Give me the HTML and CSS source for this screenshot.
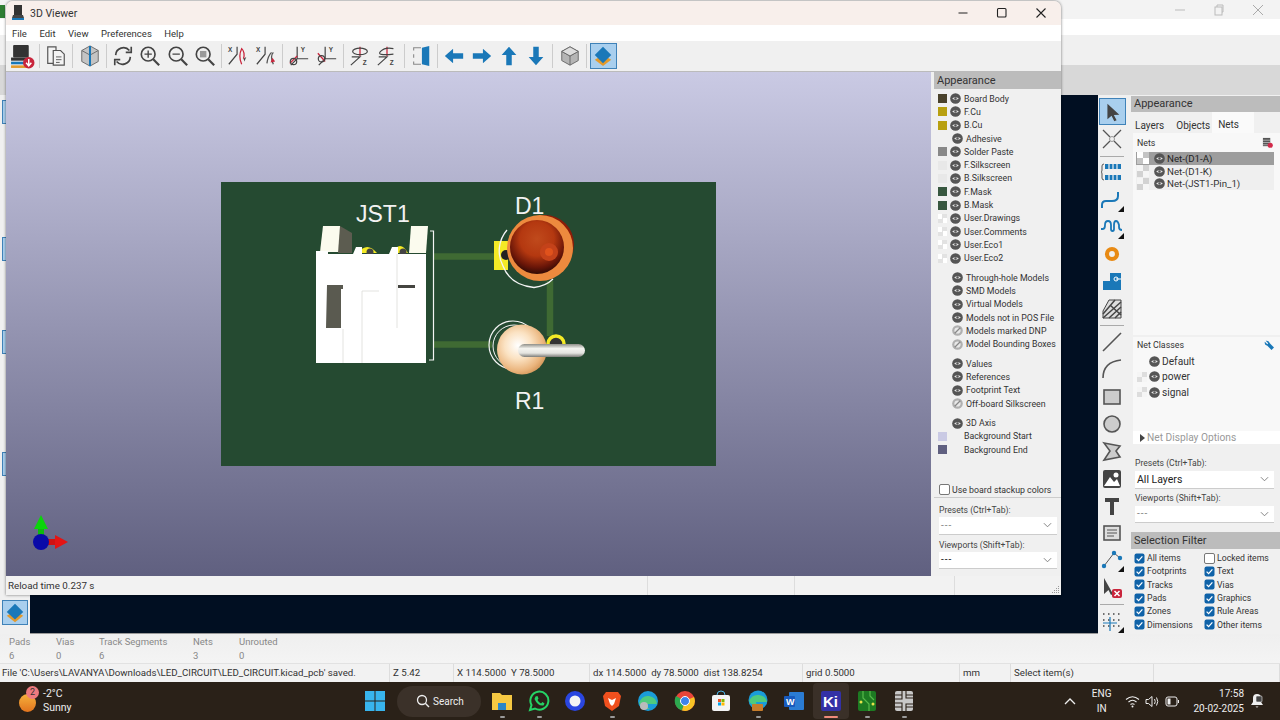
FILE: index.html
```html
<!DOCTYPE html>
<html lang="en">
<head>
<meta charset="utf-8">
<title>3D Viewer</title>
<link rel="stylesheet" href="styles.css">
</head>
<body>
<svg class="defs" width="0" height="0" aria-hidden="true">
  <symbol id="eye" viewBox="0 0 12 12"><circle cx="6" cy="6" r="5.800" fill="#555"/><path d="M2.400 6Q6 3 9.600 6Q6 9 2.400 6Z" fill="#e8e8e8"/><circle cx="6" cy="6" r="1.300" fill="#555"/></symbol>
  <symbol id="eyeoff" viewBox="0 0 12 12"><circle cx="6" cy="6" r="5.800" fill="#b0b0b0"/><circle cx="6" cy="6" r="3.400" fill="#e8e8e8"/><path d="M3 9L9 3" stroke="#888" stroke-width="1.400"/></symbol>
  <symbol id="check" viewBox="0 0 11 11"><rect x=".5" y=".5" width="10" height="10" rx="2" fill="#0f62a8"/><path d="M2.600 5.600L4.600 7.600L8.400 3.400" fill="none" stroke="#fff" stroke-width="1.300"/></symbol>
  <symbol id="chev" viewBox="0 0 10 6"><path d="M1 1L5 5L9 1" fill="none" stroke="#777" stroke-width="1"/></symbol>
</svg>

<div class="desktop">
  <!-- main PCB editor window behind -->
  <div class="main-win">
    <div class="main-title">
      <span class="main-appicon"></span>
      <div class="main-ctrl">
        <svg width="12" height="12" viewBox="0 0 12 12"><path d="M1 6H11" stroke="#bbb"/></svg>
        <svg width="12" height="12" viewBox="0 0 12 12"><rect x="2" y="3" width="7" height="8" fill="none" stroke="#bbb"/><path d="M4 3V1H10V8H9" fill="none" stroke="#bbb"/></svg>
        <svg width="12" height="12" viewBox="0 0 12 12"><path d="M1 1L11 11M11 1L1 11" stroke="#aaa"/></svg>
      </div>
    </div>
    <div class="main-menu"></div>
    <div class="main-tools"></div>
    <div class="main-strip"></div>
    <div class="main-body">
      <div class="left-tools">
        <span class="lt-btn lt-a"></span>
        <span class="lt-btn lt-b"></span>
        <span class="lt-btn lt-c"></span>
        <span class="lt-btn lt-d"></span>
        <span class="lt-btn lt-e">
          <svg width="22" height="22" viewBox="0 0 24 24"><path d="M12 10L21 15L12 22L3 15Z" fill="#e39a2c"/><path d="M12 2L21 11L12 19L3 11Z" fill="#1a78b8"/></svg>
        </span>
      </div>
      <div class="pcb-canvas"></div>
      <div class="right-tools">
        <span class="rt-btn rt-active"><svg width="22" height="22" viewBox="0 0 24 24"><path d="M7 3V20L11.500 16L14.500 22L17 21L14 15.200L20 15Z" fill="#444"/></svg></span>
        <span class="rt-btn"><svg width="24" height="24" viewBox="0 0 24 24"><path d="M3 3L10 10M21 3L14 10M3 21L10 14M21 21L14 14" stroke="#555" stroke-width="1.300"/><circle cx="12" cy="12" r="2.500" fill="none" stroke="#999"/></svg></span>
        <span class="rt-sep"></span>
        <span class="rt-btn"><svg width="24" height="24" viewBox="0 0 24 24"><path d="M5 4H21V9H5ZM5 15H21V20H5Z" fill="#1a78b8"/><path d="M9 4V9M13 4V9M17 4V9M9 15V20M13 15V20M17 15V20" stroke="#f0f0f0" stroke-width="1.200"/><path d="M4 4Q2 4 2 6V10Q2 12 1 12Q2 12 2 14V18Q2 20 4 20" fill="none" stroke="#555"/></svg></span>
        <span class="rt-btn"><svg width="24" height="24" viewBox="0 0 24 24"><path d="M2 20V17Q2 13 6 13H12Q18 13 18 8V4" fill="none" stroke="#1a78b8" stroke-width="2"/><path d="M24 24H18L24 18Z" fill="#111"/></svg></span>
        <span class="rt-btn"><svg width="24" height="24" viewBox="0 0 24 24"><path d="M1 14H3Q5 14 5 10T8 6T11 10V14Q11 16 12.500 16T14 14V10Q14 6 16 6T19 10V12Q19 15 22 15" fill="none" stroke="#1a78b8" stroke-width="1.800"/><path d="M24 24H18L24 18Z" fill="#111"/></svg></span>
        <span class="rt-btn"><svg width="20" height="20" viewBox="0 0 24 24"><circle cx="12" cy="12" r="6" fill="none" stroke="#e88a14" stroke-width="5"/></svg></span>
        <span class="rt-btn"><svg width="24" height="24" viewBox="0 0 24 24"><path d="M3 12H10V4H21V21H3Z" fill="#1a78b8"/><circle cx="16" cy="10" r="2" fill="none" stroke="#fff"/><path d="M16 10H21" stroke="#fff"/></svg></span>
        <span class="rt-btn"><svg width="24" height="24" viewBox="0 0 24 24"><path d="M3 14L9 3H21V21H3Z" fill="#ddd" stroke="#444"/><path d="M3 17L15 3M3 21L21 5M9 21L21 10M15 21L21 15M10 8L21 18" stroke="#444" stroke-width="1.500"/></svg></span>
        <span class="rt-sep"></span>
        <span class="rt-btn"><svg width="24" height="24" viewBox="0 0 24 24"><path d="M3 21L21 3" stroke="#555" stroke-width="1.600"/></svg></span>
        <span class="rt-btn"><svg width="24" height="24" viewBox="0 0 24 24"><path d="M3 21Q3 5 21 3" fill="none" stroke="#555" stroke-width="1.600"/></svg></span>
        <span class="rt-btn"><svg width="24" height="24" viewBox="0 0 24 24"><rect x="4" y="5" width="16" height="14" fill="#ccc" stroke="#555" stroke-width="1.600"/></svg></span>
        <span class="rt-btn"><svg width="24" height="24" viewBox="0 0 24 24"><circle cx="12" cy="12" r="8" fill="#ccc" stroke="#555" stroke-width="1.600"/></svg></span>
        <span class="rt-btn"><svg width="24" height="24" viewBox="0 0 24 24"><path d="M4 4L20 7L16 12L20 18L4 21L10 12Z" fill="#ccc" stroke="#555" stroke-width="1.600"/></svg></span>
        <span class="rt-btn"><svg width="24" height="24" viewBox="0 0 24 24"><rect x="3" y="3" width="18" height="18" rx="2" fill="#444"/><circle cx="16" cy="8" r="2.500" fill="#fff"/><path d="M4 19L10 10L14 15L17 12L20 19Z" fill="#fff"/></svg></span>
        <span class="rt-btn"><svg width="24" height="24" viewBox="0 0 24 24"><path d="M5 4H19V8H14V21H10V8H5Z" fill="#444"/></svg></span>
        <span class="rt-btn"><svg width="24" height="24" viewBox="0 0 24 24"><rect x="4" y="5" width="16" height="14" fill="#ddd" stroke="#555" stroke-width="1.600"/><path d="M7 9H17M7 12H17M7 15H14" stroke="#555"/></svg></span>
        <span class="rt-btn"><svg width="24" height="24" viewBox="0 0 24 24"><path d="M4 18L14 5L20 10" fill="none" stroke="#555"/><circle cx="4" cy="18" r="2.200" fill="#1a78b8"/><circle cx="14" cy="5" r="2.200" fill="#1a78b8"/><circle cx="20" cy="10" r="2.200" fill="#1a78b8"/><path d="M24 24H18L24 18Z" fill="#111"/></svg></span>
        <span class="rt-btn"><svg width="24" height="24" viewBox="0 0 24 24"><path d="M4 2V18L8.500 14L11 19L13 18Z" fill="#444"/><rect x="12" y="13" width="10" height="9" rx="2" fill="#c9253c"/><path d="M14.500 15L19.500 20M19.500 15L14.500 20" stroke="#fff" stroke-width="1.500"/></svg></span>
        <span class="rt-sep"></span>
        <span class="rt-btn"><svg width="24" height="24" viewBox="0 0 24 24"><path d="M3 5H21M3 11H21M3 17H21" stroke="#444" stroke-width="1.500" stroke-dasharray="1.500 3.500"/><path d="M3 14H17M10 8V22" stroke="#1a78b8" stroke-width="1.200"/><path d="M24 24H18L24 18Z" fill="#111"/></svg></span>
      </div>
      <aside class="pcb-panel">
        <div class="panel-head">Appearance</div>
        <div class="tabs"><span class="tab">Layers</span><span class="tab">Objects</span><span class="tab tab-on">Nets</span></div>
        <section class="nets-box">
          <div class="nets-label"><span>Nets</span>
            <svg width="11" height="11" viewBox="0 0 12 12"><rect x="1" y="1" width="8" height="9" fill="#555"/><path d="M1 3.500H9M1 6H9M1 8.500H9" stroke="#eee" stroke-width=".6"/><circle cx="9" cy="9" r="2.800" fill="#d22a4a"/></svg>
          </div>
          <div class="net-row net-sel"><i class="sw-check sw-w"></i><svg class="eye"><use href="#eye"/></svg><span>Net-(D1-A)</span></div>
          <div class="net-row"><i class="sw-check"></i><svg class="eye"><use href="#eye"/></svg><span>Net-(D1-K)</span></div>
          <div class="net-row"><i class="sw-check"></i><svg class="eye"><use href="#eye"/></svg><span>Net-(JST1-Pin_1)</span></div>
        </section>
        <section class="classes-box">
          <div class="nets-label"><span>Net Classes</span>
            <svg width="10" height="10" viewBox="0 0 12 12"><path d="M2 1L5 4L4 5L1 2Q0 6 4 7L9 12L12 9L7 4Q6 0 2 1Z" fill="#1a78b8"/></svg>
          </div>
          <div class="class-row"><svg class="eye"><use href="#eye"/></svg><span>Default</span></div>
          <div class="class-row"><i class="sw-y"></i><svg class="eye"><use href="#eye"/></svg><span>power</span></div>
          <div class="class-row"><i class="sw-y"></i><svg class="eye"><use href="#eye"/></svg><span>signal</span></div>
        </section>
        <div class="net-opts"><svg width="6" height="8" viewBox="0 0 6 8"><path d="M1 0L6 4L1 8Z" fill="#444"/></svg><span>Net Display Options</span></div>
        <div class="preset-box">
          <label class="field-label">Presets (Ctrl+Tab):</label>
          <div class="drop"><span class="drop-big">All Layers</span><svg class="chev"><use href="#chev"/></svg></div>
          <label class="field-label">Viewports (Shift+Tab):</label>
          <div class="drop"><span>---</span><svg class="chev"><use href="#chev"/></svg></div>
        </div>
        <div class="panel-head sel-head">Selection Filter</div>
        <div class="sel-grid">
          <div class="sel"><svg class="ck"><use href="#check"/></svg>All items</div>
          <div class="sel"><i class="ck-off"></i>Locked items</div>
          <div class="sel"><svg class="ck"><use href="#check"/></svg>Footprints</div>
          <div class="sel"><svg class="ck"><use href="#check"/></svg>Text</div>
          <div class="sel"><svg class="ck"><use href="#check"/></svg>Tracks</div>
          <div class="sel"><svg class="ck"><use href="#check"/></svg>Vias</div>
          <div class="sel"><svg class="ck"><use href="#check"/></svg>Pads</div>
          <div class="sel"><svg class="ck"><use href="#check"/></svg>Graphics</div>
          <div class="sel"><svg class="ck"><use href="#check"/></svg>Zones</div>
          <div class="sel"><svg class="ck"><use href="#check"/></svg>Rule Areas</div>
          <div class="sel"><svg class="ck"><use href="#check"/></svg>Dimensions</div>
          <div class="sel"><svg class="ck"><use href="#check"/></svg>Other items</div>
        </div>
      </aside>
    </div>
    <div class="msg-panel">
      <div class="msg"><span>Pads</span><span>6</span></div>
      <div class="msg"><span>Vias</span><span>0</span></div>
      <div class="msg"><span>Track Segments</span><span>6</span></div>
      <div class="msg"><span>Nets</span><span>3</span></div>
      <div class="msg"><span>Unrouted</span><span>0</span></div>
    </div>
    <div class="main-status">
      <span>File 'C:\Users\LAVANYA\Downloads\LED_CIRCUIT\LED_CIRCUIT.kicad_pcb' saved.</span>
      <span>Z 5.42</span>
      <span>X 114.5000&nbsp; Y 78.5000</span>
      <span>dx 114.5000&nbsp; dy 78.5000&nbsp; dist 138.8254</span>
      <span>grid 0.5000</span>
      <span>mm</span>
      <span>Select item(s)</span>
      <span></span>
    </div>
  </div>

  <div class="taskbar">
    <div class="weather">
      <span class="sun"><b class="badge">2</b></span>
      <div class="weather-text"><span>-2°C</span><span>Sunny</span></div>
    </div>
    <div class="task-center">
      <svg class="win" width="22" height="22" viewBox="0 0 22 22"><path d="M1 1H10.500V10.500H1ZM11.500 1H21V10.500H11.500ZM1 11.500H10.500V21H1ZM11.500 11.500H21V21H11.500Z" fill="#38b5ee"/></svg>
      <div class="search"><svg width="14" height="14" viewBox="0 0 14 14"><circle cx="6" cy="6" r="4.500" fill="none" stroke="#eee" stroke-width="1.300"/><path d="M9.300 9.300L13 13" stroke="#eee" stroke-width="1.400"/></svg><span>Search</span></div>
      <span class="tb-ico"><svg width="22" height="22" viewBox="0 0 22 22"><path d="M1 3H9L11 5H21V20H1Z" fill="#f5c842"/><rect x="7" y="13" width="8" height="7" fill="#2a86c8"/></svg><i class="pip"></i></span>
      <span class="tb-ico"><svg width="22" height="22" viewBox="0 0 22 22"><path d="M2 20L3.500 15A9 9 0 1 1 7 18.500Z" fill="none" stroke="#25d366" stroke-width="2"/><path d="M7.500 6.500L9.500 6L10.500 8.500L9.500 10Q11 13 13 13.500L14.500 12L16.500 13.500L15.500 15.500Q10 16.500 6.500 9Z" fill="#25d366"/></svg><i class="pip"></i></span>
      <span class="tb-ico"><svg width="22" height="22" viewBox="0 0 22 22"><circle cx="11" cy="11" r="10" fill="#2a46e0"/><circle cx="11" cy="11" r="5.500" fill="#f4f4f4"/></svg></span>
      <span class="tb-ico"><svg width="22" height="22" viewBox="0 0 22 22"><path d="M5 2H17L20 6L18 16L11 21L4 16L2 6Z" fill="#f0501e"/><path d="M7 8L11 10L15 8L13 14L11 16L9 14Z" fill="#fff"/></svg><i class="pip"></i></span>
      <span class="tb-ico"><svg width="22" height="22" viewBox="0 0 22 22"><circle cx="11" cy="11" r="10" fill="#1a9cd8"/><path d="M2 13Q5 5 12 6T20 14H9Q9 17 13 19Q5 20 2 13Z" fill="#4fcb7e"/><circle cx="7" cy="16" r="4" fill="#bbb"/></svg></span>
      <span class="tb-ico"><svg width="22" height="22" viewBox="0 0 22 22"><circle cx="11" cy="11" r="10" fill="#e8453a"/><path d="M11 11L2 6A10 10 0 0 0 8 20.500Z" fill="#2da94f"/><path d="M11 11L8 20.500A10 10 0 0 0 20 7Z" fill="#f7c325"/><circle cx="11" cy="11" r="4.500" fill="#3d83ec" stroke="#fff"/></svg></span>
      <span class="tb-ico"><svg width="22" height="22" viewBox="0 0 22 22"><rect x="2" y="5" width="18" height="16" rx="2" fill="#f4f4f4"/><path d="M7 5Q7 1 11 1T15 5" fill="none" stroke="#4bb4e8"/><path d="M8 9H11V12H8Z" fill="#f25022"/><path d="M11.500 9H14.500V12H11.500Z" fill="#7fba00"/><path d="M8 12.500H11V15.500H8Z" fill="#00a4ef"/><path d="M11.500 12.500H14.500V15.500H11.500Z" fill="#ffb900"/></svg></span>
      <span class="tb-ico"><svg width="22" height="22" viewBox="0 0 22 22"><circle cx="11" cy="10" r="9.500" fill="#1a9cd8"/><path d="M2 11Q5 4 12 5T20 12H9Q9 15 13 16Q5 17 2 11Z" fill="#4fcb7e"/><rect x="5" y="14" width="11" height="7" rx="1" fill="#c77d2b"/></svg><i class="pip"></i></span>
      <span class="tb-ico"><svg width="22" height="22" viewBox="0 0 22 22"><rect x="6" y="2" width="15" height="18" rx="1" fill="#2b7cd3"/><rect x="1" y="6" width="11" height="11" rx="1" fill="#185abd"/><text x="3" y="15" class="tb-w">W</text></svg></span>
      <span class="tb-ico tb-on"><svg width="22" height="22" viewBox="0 0 22 22"><rect x="1" y="1" width="20" height="20" rx="2" fill="#3331a6"/><text x="3" y="17" class="tb-ki">Ki</text></svg><i class="pip pip-on"></i></span>
      <span class="tb-ico"><svg width="22" height="22" viewBox="0 0 22 22"><rect x="2" y="1" width="18" height="20" rx="2" fill="#1d7a22"/><path d="M7 1V8L13 14V21M14 1V6L18 10" fill="none" stroke="#57b94a" stroke-width="1.200"/><circle cx="5" cy="12" r="1.500" fill="#e8e24a"/><circle cx="17" cy="14" r="1.500" fill="#e8e24a"/></svg><i class="pip"></i></span>
      <span class="tb-ico"><svg width="22" height="22" viewBox="0 0 22 22"><rect x="2" y="1" width="18" height="20" rx="2" fill="#c8c8c8"/><path d="M9 1V9H2M13 1V8H20M9 21V13H2M13 21V14H20M2 5H9M13 5H20M2 17H9M13 17H20" fill="none" stroke="#2a2118" stroke-width="1.100"/></svg><i class="pip"></i></span>
    </div>
    <div class="tray">
      <svg width="12" height="8" viewBox="0 0 12 8"><path d="M1 7L6 2L11 7" fill="none" stroke="#eee" stroke-width="1.300"/></svg>
      <div class="lang"><span>ENG</span><span>IN</span></div>
      <svg width="15" height="13" viewBox="0 0 15 13"><path d="M1 4.500Q7.500 -1 14 4.500M3.500 7Q7.500 3.500 11.500 7M5.500 9.500Q7.500 8 9.500 9.500" fill="none" stroke="#eee" stroke-width="1.100"/><circle cx="7.500" cy="11.500" r="1" fill="#eee"/></svg>
      <svg width="15" height="13" viewBox="0 0 15 13"><path d="M1 4.500H3.500L7 1.500V11.500L3.500 8.500H1Z" fill="none" stroke="#eee"/><path d="M9.500 4Q11 6.500 9.500 9M11.500 2.500Q14 6.500 11.500 10.500" fill="none" stroke="#eee"/></svg>
      <svg width="15" height="11" viewBox="0 0 15 11"><rect x="1" y="1" width="11" height="9" rx="2" fill="none" stroke="#eee"/><rect x="2.500" y="2.500" width="3" height="6" fill="#eee"/><path d="M13.500 4V7" stroke="#eee"/></svg>
      <div class="clock"><span>17:58</span><span>20-02-2025</span></div>
      <svg width="14" height="16" viewBox="0 0 14 16"><path d="M7 1Q3 1 3 5V9L1 12H13L11 9V5Q11 1 7 1ZM5.500 13.500Q7 15.500 8.500 13.500Z" fill="#eee"/><rect x="6" y="3" width="6" height="6" rx="1" fill="#444" stroke="#eee" stroke-width=".6"/></svg>
    </div>
  </div>

  <!-- 3D Viewer floating window -->
  <div class="viewer">
    <div class="v-title">
      <svg width="14" height="16" viewBox="0 0 14 16"><rect x="3" y="0" width="8" height="10" fill="#333"/><path d="M2 10H12L13 13H1Z" fill="#444"/><rect x="1" y="13" width="12" height="2" fill="#1a78b8"/></svg>
      <span>3D Viewer</span>
      <div class="v-ctrl">
        <svg width="12" height="12" viewBox="0 0 12 12"><path d="M1.500 6H10.500" stroke="#222" stroke-width="1.200"/></svg>
        <svg width="12" height="12" viewBox="0 0 12 12"><rect x="1.500" y="1.500" width="8.500" height="8.500" rx="1" fill="none" stroke="#222" stroke-width="1.100"/></svg>
        <svg width="12" height="12" viewBox="0 0 12 12"><path d="M1.500 1.500L10.500 10.500M10.500 1.500L1.500 10.500" stroke="#222" stroke-width="1.100"/></svg>
      </div>
    </div>
    <nav class="v-menu"><span>File</span><span>Edit</span><span>View</span><span>Preferences</span><span>Help</span></nav>
    <div class="v-tools">
      <span class="t-btn"><svg width="25" height="25" viewBox="0 0 24 24"><rect x="3" y="1" width="15" height="12" rx="1" fill="#333"/><rect x="1" y="13" width="17" height="3" fill="#333"/><rect x="1" y="17" width="17" height="2.500" fill="#1a78b8"/><rect x="1" y="20.500" width="17" height="2.500" fill="#e39a2c"/><circle cx="18" cy="18" r="5.500" fill="#c9253c"/><path d="M18 14.500V20M15.500 18L18 21L20.500 18" fill="none" stroke="#fff" stroke-width="1.400"/></svg></span>
      <i class="t-sep"></i>
      <span class="t-btn"><svg width="22" height="22" viewBox="0 0 24 24"><path d="M3 2H12V20H3Z" fill="#f4f4f4" stroke="#555" stroke-width="1.300"/><path d="M9 6H17L21 10V22H9Z" fill="#f4f4f4" stroke="#555" stroke-width="1.300"/><path d="M12 13H18M12 16H18M12 19H16" stroke="#555"/></svg></span>
      <i class="t-sep"></i>
      <span class="t-btn"><svg width="22" height="22" viewBox="0 0 24 24"><path d="M12 1L21 6V18L12 23L3 18V6Z" fill="#c4c4c4" stroke="#666"/><path d="M3 6L12 11L21 6M12 11V23" fill="none" stroke="#666"/><path d="M12 1V23" stroke="#1a78b8" stroke-width="2.200"/></svg></span>
      <i class="t-sep"></i>
      <span class="t-btn"><svg width="22" height="22" viewBox="0 0 24 24"><path d="M4 11A8.500 8.500 0 0 1 19 6M20 13A8.500 8.500 0 0 1 5 18" fill="none" stroke="#444" stroke-width="1.800"/><path d="M21 2V8H15M3 22V16H9" fill="none" stroke="#444" stroke-width="1.800"/></svg></span>
      <span class="t-btn"><svg width="22" height="22" viewBox="0 0 24 24"><circle cx="10" cy="10" r="7.500" fill="none" stroke="#444" stroke-width="1.800"/><path d="M15.500 15.500L22 22" stroke="#444" stroke-width="2.400"/><path d="M6 10H14M10 6V14" stroke="#444" stroke-width="1.500"/></svg></span>
      <span class="t-btn"><svg width="22" height="22" viewBox="0 0 24 24"><circle cx="10" cy="10" r="7.500" fill="none" stroke="#444" stroke-width="1.800"/><path d="M15.500 15.500L22 22" stroke="#444" stroke-width="2.400"/><path d="M6 10H14" stroke="#444" stroke-width="1.500"/></svg></span>
      <span class="t-btn"><svg width="22" height="22" viewBox="0 0 24 24"><circle cx="10" cy="10" r="7.500" fill="none" stroke="#444" stroke-width="1.800"/><path d="M15.500 15.500L22 22" stroke="#444" stroke-width="2.400"/><rect x="6.500" y="6.500" width="7" height="7" fill="#999"/></svg></span>
      <i class="t-sep"></i>
      <span class="t-btn"><svg width="22" height="22" viewBox="0 0 24 24"><text x="1" y="8" class="ax">X</text><path d="M11 2V10L2 21" fill="none" stroke="#444" stroke-width="1.300"/><path d="M16 21Q12 12 16 4Q20 8 18 15" fill="none" stroke="#c9253c" stroke-width="1.400"/><path d="M18 15L21 13L19 18" fill="#444"/></svg></span>
      <span class="t-btn"><svg width="22" height="22" viewBox="0 0 24 24"><text x="1" y="8" class="ax">X</text><path d="M11 2V10L2 21" fill="none" stroke="#444" stroke-width="1.300"/><path d="M20 21Q16 12 20 8M13 20Q14 12 18 8" fill="none" stroke="#555" stroke-width="1.400"/><path d="M19 14L22 18L17 19Z" fill="#c9253c"/></svg></span>
      <i class="t-sep"></i>
      <span class="t-btn"><svg width="22" height="22" viewBox="0 0 24 24"><text x="14" y="8" class="ax">Y</text><path d="M10 2V15H22M10 15L3 22" fill="none" stroke="#444" stroke-width="1.300"/><path d="M2 20L10 12" stroke="#c9253c" stroke-width="1.400"/><circle cx="6" cy="18" r="3.500" fill="none" stroke="#444" stroke-width="1.300"/></svg></span>
      <span class="t-btn"><svg width="22" height="22" viewBox="0 0 24 24"><text x="14" y="8" class="ax">Y</text><path d="M10 2V15H22M10 15L3 22" fill="none" stroke="#444" stroke-width="1.300"/><path d="M2 9L10 18" stroke="#c9253c" stroke-width="1.400"/><circle cx="6" cy="15" r="3.500" fill="none" stroke="#444" stroke-width="1.300"/></svg></span>
      <i class="t-sep"></i>
      <span class="t-btn"><svg width="22" height="22" viewBox="0 0 24 24"><text x="15" y="22" class="ax">Z</text><path d="M3 13H12L2 22" fill="none" stroke="#444" stroke-width="1.300"/><path d="M12 2V12" stroke="#c9253c" stroke-width="1.400"/><ellipse cx="12" cy="7" rx="8" ry="3.500" fill="none" stroke="#444" stroke-width="1.300"/></svg></span>
      <span class="t-btn"><svg width="22" height="22" viewBox="0 0 24 24"><text x="15" y="22" class="ax">Z</text><path d="M3 13H12L2 22" fill="none" stroke="#444" stroke-width="1.300"/><path d="M12 2V12" stroke="#c9253c" stroke-width="1.400"/><path d="M19 4Q10 2 5 7T19 10" fill="none" stroke="#444" stroke-width="1.300"/></svg></span>
      <i class="t-sep"></i>
      <span class="t-btn"><svg width="22" height="22" viewBox="0 0 24 24"><path d="M13 3L21 1V23L13 21Z" fill="#1a78b8"/><path d="M12 3H4V6M4 10V14M4 18V21H12" fill="none" stroke="#888" stroke-width="1.200"/></svg></span>
      <i class="t-sep"></i>
      <span class="t-btn"><svg width="22" height="22" viewBox="0 0 24 24"><path d="M2 12L11 4V9H22V15H11V20Z" fill="#1a78b8"/></svg></span>
      <span class="t-btn"><svg width="22" height="22" viewBox="0 0 24 24"><path d="M22 12L13 4V9H2V15H13V20Z" fill="#1a78b8"/></svg></span>
      <span class="t-btn"><svg width="22" height="22" viewBox="0 0 24 24"><path d="M12 2L20 11H15V22H9V11H4Z" fill="#1a78b8"/></svg></span>
      <span class="t-btn"><svg width="22" height="22" viewBox="0 0 24 24"><path d="M12 22L20 13H15V2H9V13H4Z" fill="#1a78b8"/></svg></span>
      <i class="t-sep"></i>
      <span class="t-btn"><svg width="22" height="22" viewBox="0 0 24 24"><path d="M12 2L21 7V17L12 22L3 17V7Z" fill="#b5b5b5" stroke="#666"/><path d="M3 7L12 12L21 7M12 12V22" fill="none" stroke="#666"/><path d="M3 7L12 2L21 7L12 12Z" fill="#ddd" stroke="#666"/></svg></span>
      <i class="t-sep"></i>
      <span class="t-btn t-on"><svg width="22" height="22" viewBox="0 0 24 24"><path d="M12 11L21 16L12 23L3 16Z" fill="#e39a2c"/><path d="M12 2L21 11L12 20L3 11Z" fill="#1a78b8"/></svg></span>
    </div>
    <div class="v-body">
      <div class="v-canvas">
        <svg class="scene" width="924" height="504" viewBox="7 71 924 504">
          <defs>
            <radialGradient id="ledg" cx="50%" cy="35%" r="70%"><stop offset="0" stop-color="#c04a1c"/><stop offset=".45" stop-color="#b43810"/><stop offset=".75" stop-color="#6a1608"/><stop offset="1" stop-color="#1c0604"/></radialGradient>
            <radialGradient id="resg" cx="42%" cy="42%" r="60%"><stop offset="0" stop-color="#fff"/><stop offset=".45" stop-color="#fbe2c2"/><stop offset=".85" stop-color="#eab47c"/><stop offset="1" stop-color="#d89c60"/></radialGradient>
            <linearGradient id="leadg" x1="0" y1="0" x2="0" y2="1"><stop offset="0" stop-color="#8e8e88"/><stop offset=".35" stop-color="#f4f4f0"/><stop offset=".7" stop-color="#e4e4e0"/><stop offset="1" stop-color="#7c7c78"/></linearGradient>
          </defs>
          <rect x="221" y="181" width="495" height="284" fill="#254a31"/>
          <path d="M433 255.500H495M433 343.500H492M550 280V335" fill="none" stroke="#3f6a33" stroke-width="6.500"/>
          <text x="356" y="221" class="silk">JST1</text>
          <text x="515" y="213" class="silk">D1</text>
          <text x="515" y="408" class="silk">R1</text>
          <path d="M430 230H433.500V359H429" fill="none" stroke="#f4f4f4" stroke-width="1.200"/>
          <!-- pads behind connector -->
          <path d="M358 252Q367 240 377 252Z" fill="#f4ea26"/>
          <path d="M392 252Q400 238 408 252Z" fill="#f4ea26"/>
          <circle cx="370" cy="251" r="3.500" fill="#444"/>
          <circle cx="403" cy="251" r="3.500" fill="#444"/>
          <!-- JST connector -->
          <path d="M320 251L323 225H340L340 251Z" fill="#fbfbee"/>
          <path d="M340 225L352 232V252H338Z" fill="#5c5c50"/>
          <path d="M411 225H428L426 252H409Z" fill="#fbfbee"/>
          <path d="M316 250H328V253H353L356 246H362V253H389L392 246H398V253H426V362H316Z" fill="#fff"/>
          <path d="M327 284H343V288H341V327H326Z" fill="#5a5a50"/>
          <rect x="398" y="284" width="17" height="3" fill="#454540"/>
          <path d="M343 328V362M362 290V362M362 290H379M397 253V327" fill="none" stroke="#dcdcd8" stroke-width=".8"/>
          <!-- LED -->
          <rect x="494" y="240" width="14" height="29" fill="#f4ea26"/>
          <circle cx="506" cy="254" r="5" fill="#222"/>
          <path d="M507 229A32 32 0 0 0 503 265Q510 284 534 286.500Q546 285 553 278" fill="none" stroke="#f4f4f4" stroke-width="1.300"/>
          <circle cx="545" cy="243" r="29" fill="#8c1c08"/>
          <circle cx="540" cy="247" r="33" fill="#ed8a3e"/>
          <circle cx="537" cy="246" r="27" fill="url(#ledg)"/>
          <circle cx="549" cy="251" r="9" fill="#c4421a"/>
          <circle cx="549" cy="251" r="4" fill="#e0521c"/>
          <!-- resistor -->
          <circle cx="513" cy="344" r="24" fill="none" stroke="#f4f4f4" stroke-width="1.200"/>
          <circle cx="514" cy="345" r="21" fill="none" stroke="#f4f4f4" stroke-width="1"/>
          <circle cx="556" cy="343" r="7" fill="#333"/>
          <path d="M548 343A8 8 0 0 1 564 343" fill="none" stroke="#f4ea26" stroke-width="3.500"/>
          <circle cx="522" cy="348.500" r="25" fill="url(#resg)"/>
          <rect x="518" y="343" width="67" height="13" rx="6.500" fill="url(#leadg)"/>
          <!-- axis -->
          <path d="M41 540V526" stroke="#0dbb0d" stroke-width="6"/>
          <path d="M41 514L48 528H34Z" fill="#0bd40b"/>
          <path d="M48 541H58" stroke="#d01212" stroke-width="6"/>
          <path d="M68 541L55 534V548Z" fill="#e41414"/>
          <circle cx="41" cy="541" r="8" fill="#0a0aa8"/>
        </svg>
      </div>
      <aside class="v-panel">
        <div class="panel-head">Appearance</div>
        <div class="layer-list">
          <div class="lr"><i class="sw sw-board"></i><svg class="eye"><use href="#eye"/></svg><span>Board Body</span></div>
          <div class="lr"><i class="sw sw-cu"></i><svg class="eye"><use href="#eye"/></svg><span>F.Cu</span></div>
          <div class="lr"><i class="sw sw-cu"></i><svg class="eye"><use href="#eye"/></svg><span>B.Cu</span></div>
          <div class="lr lr-n"><svg class="eye"><use href="#eye"/></svg><span>Adhesive</span></div>
          <div class="lr"><i class="sw sw-paste"></i><svg class="eye"><use href="#eye"/></svg><span>Solder Paste</span></div>
          <div class="lr"><i class="sw sw-silk"></i><svg class="eye"><use href="#eye"/></svg><span>F.Silkscreen</span></div>
          <div class="lr"><i class="sw sw-silk"></i><svg class="eye"><use href="#eye"/></svg><span>B.Silkscreen</span></div>
          <div class="lr"><i class="sw sw-mask"></i><svg class="eye"><use href="#eye"/></svg><span>F.Mask</span></div>
          <div class="lr"><i class="sw sw-mask"></i><svg class="eye"><use href="#eye"/></svg><span>B.Mask</span></div>
          <div class="lr"><i class="sw sw-chk"></i><svg class="eye"><use href="#eye"/></svg><span>User.Drawings</span></div>
          <div class="lr"><i class="sw sw-chk"></i><svg class="eye"><use href="#eye"/></svg><span>User.Comments</span></div>
          <div class="lr"><i class="sw sw-chk"></i><svg class="eye"><use href="#eye"/></svg><span>User.Eco1</span></div>
          <div class="lr"><i class="sw sw-chk"></i><svg class="eye"><use href="#eye"/></svg><span>User.Eco2</span></div>
          <div class="lr lr-n lr-gap"><svg class="eye"><use href="#eye"/></svg><span>Through-hole Models</span></div>
          <div class="lr lr-n"><svg class="eye"><use href="#eye"/></svg><span>SMD Models</span></div>
          <div class="lr lr-n"><svg class="eye"><use href="#eye"/></svg><span>Virtual Models</span></div>
          <div class="lr lr-n"><svg class="eye"><use href="#eye"/></svg><span>Models not in POS File</span></div>
          <div class="lr lr-n"><svg class="eye"><use href="#eyeoff"/></svg><span>Models marked DNP</span></div>
          <div class="lr lr-n"><svg class="eye"><use href="#eyeoff"/></svg><span>Model Bounding Boxes</span></div>
          <div class="lr lr-n lr-gap"><svg class="eye"><use href="#eye"/></svg><span>Values</span></div>
          <div class="lr lr-n"><svg class="eye"><use href="#eye"/></svg><span>References</span></div>
          <div class="lr lr-n"><svg class="eye"><use href="#eye"/></svg><span>Footprint Text</span></div>
          <div class="lr lr-n"><svg class="eye"><use href="#eyeoff"/></svg><span>Off-board Silkscreen</span></div>
          <div class="lr lr-n lr-gap"><svg class="eye"><use href="#eye"/></svg><span>3D Axis</span></div>
          <div class="lr"><i class="sw sw-bg1"></i><i class="eye-blank"></i><span>Background Start</span></div>
          <div class="lr"><i class="sw sw-bg2"></i><i class="eye-blank"></i><span>Background End</span></div>
        </div>
        <div class="stackup"><i class="ck-off"></i><span>Use board stackup colors</span></div>
        <div class="v-presets">
          <label class="field-label">Presets (Ctrl+Tab):</label>
          <div class="drop"><span>---</span><svg class="chev"><use href="#chev"/></svg></div>
          <label class="field-label">Viewports (Shift+Tab):</label>
          <div class="drop"><span class="drop-dark">---</span><svg class="chev"><use href="#chev"/></svg></div>
        </div>
      </aside>
    </div>
    <div class="v-status">
      <span>Reload time 0.237 s</span><span></span><span></span><span></span>
      <svg class="grip" width="9" height="9" viewBox="0 0 9 9"><path d="M7 1h1v1H7zM5 3h1v1H5zM7 3h1v1H7zM3 5h1v1H3zM5 5h1v1H5zM7 5h1v1H7zM1 7h1v1H1zM3 7h1v1H3zM5 7h1v1H5zM7 7h1v1H7z" fill="#999"/></svg>
    </div>
  </div>
</div>
</body>
</html>
```

FILE: styles.css
```css
* { box-sizing: border-box; }
html, body { margin: 0; padding: 0; }
body {
  width: 1280px; height: 720px; overflow: hidden;
  font-family: "Roboto", "Liberation Sans", sans-serif;
  font-size: 10px; color: #222; background: #222;
}
.defs { position: absolute; }
.desktop { position: relative; width: 1280px; height: 720px; display: flex; flex-direction: column; }

/* main window */
.main-win { height: 682px; display: flex; flex-direction: column; background: #f0f0f0; }
.main-title { height: 19px; background: #f3f3f3; display: flex; align-items: center; padding: 0 16px 0 0; }
.main-appicon { width: 5px; height: 13px; margin-top: 3px; background: #2e7d32; }
.main-ctrl { margin-left: auto; display: flex; gap: 27px; }
.main-menu { height: 16px; background: #fff; }
.main-tools { height: 30px; background: #f0f0f0; }
.main-strip { height: 30px; background: #d8d8d8; }
.main-body { height: 539px; display: flex; }
.left-tools { width: 30px; background: #f0f0f0; padding-left: 2px; display: flex; flex-direction: column; align-items: flex-start; }
.lt-btn { width: 26px; height: 24px; flex: none; background: #a9cfee; border: 1px solid #3f82b8; display: flex; align-items: center; justify-content: center; }
.lt-a { margin-top: 5px; }
.lt-b { margin-top: 113px; }
.lt-c { margin-top: 69px; }
.lt-d { margin-top: 98px; }
.lt-e { margin-top: 124px; height: 25px; }
.pcb-canvas { flex: 1; background: #010f22; border-bottom: 1px solid #999; }
.right-tools { width: 33px; background: #f0f0f0; padding: 3px 5px 0 0; display: flex; flex-direction: column; align-items: center; }
.rt-btn { width: 27px; height: 27.300px; flex: none; display: flex; align-items: center; justify-content: center; }
.rt-active { background: #a9cfee; box-shadow: inset 0 0 0 1px #3f82b8; }
.rt-sep { width: 24px; height: 1px; margin: 3px 0 2px; background: #aaa; flex: none; }

.pcb-panel { width: 149px; display: flex; flex-direction: column; background: #f0f0f0; }
.panel-head { height: 16px; background: #bcbcbc; font-size: 11px; line-height: 16px; padding-left: 3px; color: #333; }
.pcb-panel > .panel-head:first-child { margin-top: 1px; }
.tabs { height: 21px; display: flex; align-items: flex-end; padding-left: 4px; font-size: 10px; color: #333; }
.tab { height: 15px; line-height: 15px; margin-right: 12px; }
.tab:nth-child(2) { margin-right: 2px; }
.tab-on { background: #fafafa; padding: 0 15px 0 6px; height: 21px; line-height: 25px; margin-right: 0; }
.nets-box { height: 202px; background: #f8f8f8; padding: 3px 6px 0 3px; margin-left: 2px; }
.nets-label { display: flex; justify-content: space-between; align-items: center; height: 13px; padding: 0 1px 0 1px; font-size: 8.800px; color: #333; }
.net-row { display: flex; align-items: center; height: 12.800px; background: #efefef; font-size: 9.700px; color: #333; }
.nets-label + .net-row { margin-top: 3px; }
.net-sel { background: #9d9d9d; color: #222; }
.net-row .eye { width: 11px; height: 11px; margin: 0 2px 0 5px; }
.sw-check { width: 12px; height: 12px; margin-left: 1px; background: conic-gradient(#d2d2d2 25%, #f5f5f5 0 50%, #d2d2d2 0 75%, #f5f5f5 0); background-size: 12px 12px; }
.sw-w { background: conic-gradient(#c4c4c4 25%, #fff 0 50%, #c4c4c4 0 75%, #fff 0); background-size: 12px 12px; }
.classes-box { height: 94px; background: #f8f8f8; margin: 2px 0 0 2px; padding: 1px 5px 0 3px; }
.class-row { display: flex; align-items: center; height: 15.300px; gap: 2px; padding-left: 13px; position: relative; font-size: 10.200px; color: #333; }
.nets-label + .class-row { margin-top: 3px; }
.class-row .eye { width: 11px; height: 11px; }
.sw-y { position: absolute; left: 1px; width: 10px; height: 10px; background: conic-gradient(#ddd 25%, #f5f5f5 0 50%, #ddd 0 75%, #f5f5f5 0); background-size: 10px 10px; }
.net-opts { height: 13px; margin-left: 2px; background: #fff; display: flex; align-items: center; gap: 2px; padding-left: 6px; color: #999; font-size: 10.200px; }
.preset-box { padding: 13px 6px 0 4px; height: 88px; }
.field-label { display: block; font-size: 8.600px; height: 12px; line-height: 12px; color: #444; }
.drop { height: 17.500px; background: #fff; border-bottom: 1px solid #ccc; display: flex; align-items: center; justify-content: space-between; padding: 0 5px 0 2px; margin: 2px 0 3px; font-size: 10px; letter-spacing: 1px; color: #888; }
.drop-big { color: #222; font-size: 10.500px; letter-spacing: 0; }
.drop-dark { color: #222; }
.chev { width: 9px; height: 6px; }
.sel-head { height: 17px; line-height: 17px; }
.sel-grid { padding: 2.500px 0 0 3px; display: grid; grid-template-columns: 70px 75px; grid-auto-rows: 13.300px; font-size: 8.700px; color: #333; }
.sel { display: flex; align-items: center; gap: 2px; }
.ck { width: 11px; height: 11px; flex: none; }
.ck-off { display: block; width: 11px; height: 11px; flex: none; background: #fff; border: 1px solid #777; border-radius: 2px; }

.msg-panel { height: 29px; display: flex; padding: 1px 0 0 9px; background: linear-gradient(#efefef, #f4f4f4); color: #888; font-size: 9.500px; }
.msg { display: flex; flex-direction: column; line-height: 14px; }
.msg:nth-child(1) { width: 47px; }
.msg:nth-child(2) { width: 43px; }
.msg:nth-child(3) { width: 94px; }
.msg:nth-child(4) { width: 46px; }
.main-status { height: 19px; display: grid; grid-template-columns: 390px 64px 136px 213px 157px 51px 143px 1fr; background: #f2f2f2; border-top: 1px solid #e2e2e2; font-size: 9.700px; line-height: 17px; color: #333; }
.main-status span { padding-left: 3px; border-right: 1px solid #ddd; white-space: nowrap; overflow: hidden; }
.main-status span:first-child { padding-left: 2px; }

/* taskbar */
.taskbar { height: 38px; background: #2a2118; position: relative; display: flex; align-items: center; color: #eee; }
.weather { width: 360px; padding-left: 19px; display: flex; align-items: center; gap: 7px; font-size: 10px; }
.sun { width: 17px; height: 18px; margin-top: 3px; background: linear-gradient(#f7b13c, #e2741e); border-radius: 50%; position: relative; }
.badge { position: absolute; left: 7px; top: -8px; width: 13px; height: 13px; border-radius: 50%; background: #ee7a7e; color: #333; font: 400 9px/13px "Roboto", sans-serif; text-align: center; }
.weather-text { display: flex; flex-direction: column; line-height: 14px; font-size: 10.500px; }
.task-center { display: flex; align-items: center; }
.win { margin-left: 4px; margin-right: 11px; }
.search { width: 84px; height: 31px; margin-right: 3px; border-radius: 16px; background: #3b3129; display: flex; align-items: center; gap: 3px; padding-left: 19px; font-size: 10px; color: #eee; }
.tb-ico { width: 36.500px; height: 36px; display: flex; align-items: center; justify-content: center; position: relative; }
.tb-on { background: #3a3028; border-radius: 4px; }
.pip { position: absolute; bottom: 1px; left: 16px; width: 5px; height: 2px; background: #9a9a9a; border-radius: 1px; }
.pip-on { left: 11px; width: 14px; background: #f08a7a; }
.tb-w { font: 700 9px "Liberation Sans", sans-serif; fill: #fff; }
.tb-ki { font: 700 15px "Liberation Sans", sans-serif; fill: #fff; }
.tray { margin-left: auto; display: flex; align-items: center; gap: 5px; padding-right: 16px; font-size: 10px; }
.lang { display: flex; flex-direction: column; align-items: center; line-height: 15px; margin: 0 8px 0 11px; }
.clock { display: flex; flex-direction: column; align-items: flex-end; line-height: 15px; margin: 0 1px 0 9px; }

/* 3D viewer */
.viewer { position: absolute; left: 6px; top: 1px; width: 1055px; height: 594px; display: flex; flex-direction: column; background: #f0f0f0; border-radius: 7px 7px 0 0; box-shadow: 0 0 3px rgba(0,0,0,.55); overflow: hidden; }
.v-title { height: 24px; flex: none; background: #f8efeb; display: flex; align-items: center; gap: 5px; padding-left: 5px; font-size: 10.500px; color: #333; }
.v-ctrl { margin-left: auto; display: flex; gap: 27px; padding-right: 14px; }
.v-menu { height: 16px; flex: none; background: #fff; display: flex; gap: 12.500px; padding-left: 6px; align-items: center; font-size: 9.500px; color: #333; }
.v-tools { height: 30px; flex: none; display: flex; align-items: center; padding-left: 3px; background: #f0f0f0; }
.t-btn { width: 27.300px; height: 26px; flex: none; display: flex; align-items: center; justify-content: center; }
.t-on { background: #a9cfee; box-shadow: inset 0 0 0 1px #3f82b8; }
.t-sep { width: 6.200px; height: 24px; flex: none; background: linear-gradient(#ccc, #ccc) center / 1px 100% no-repeat; }
.ax { font: 700 7px "Liberation Sans", sans-serif; fill: #444; }
.v-body { flex: 1; display: flex; border-top: 1px solid #bbb; min-height: 0; }
.v-canvas { width: 925px; padding-left: 1px; background: linear-gradient(#cacae4, #606080); }
.scene { display: block; position: relative; }
.v-panel { width: 127px; margin-left: 3px; background: #f0f0f0; display: flex; flex-direction: column; }
.v-panel .panel-head { height: 17px; line-height: 17px; }
.layer-list { padding: 3px 0 0 4px; height: 393px; font-size: 8.800px; color: #333; }
.lr { display: flex; align-items: center; height: 13.300px; }
.lr-n { padding-left: 14px; }
.lr-gap { margin-top: 6.200px; }
.lr .eye, .eye-blank { width: 11px; height: 11px; flex: none; margin-right: 3px; }
.eye-blank { display: block; }
.sw { width: 9px; height: 9px; flex: none; margin-right: 3px; }
.sw-board { background: #4a422c; }
.sw-cu { background: #b8a010; }
.sw-paste { background: #888; }
.sw-silk { background: #e8e8e8; }
.sw-mask { background: #37573f; }
.sw-chk { background: conic-gradient(#e2e2e2 25%, #fff 0 50%, #e2e2e2 0 75%, #fff 0); background-size: 9px 9px; }
.sw-bg1 { background: #cacae4; }
.sw-bg2 { background: #606080; }
.stackup { height: 16px; display: flex; align-items: center; gap: 2px; padding-left: 5px; border-bottom: 1px solid #ccc; font-size: 8.800px; color: #333; }
.v-presets { padding: 6px 4px 0 5px; }
.v-presets .drop { margin: 1px 0 4px; }
.v-status { height: 19px; flex: none; display: grid; grid-template-columns: 642px 147px 160px 1fr; background: #f2f2f2; font-size: 9.800px; line-height: 20px; position: relative; color: #333; }
.v-status span { padding-left: 2px; border-right: 1px solid #ddd; }
.v-status span:last-of-type { border-right: 0; }
.grip { position: absolute; right: 1px; bottom: 1px; }
.silk { font: 400 23px "Liberation Sans", sans-serif; fill: #f2f2f2; }
```
